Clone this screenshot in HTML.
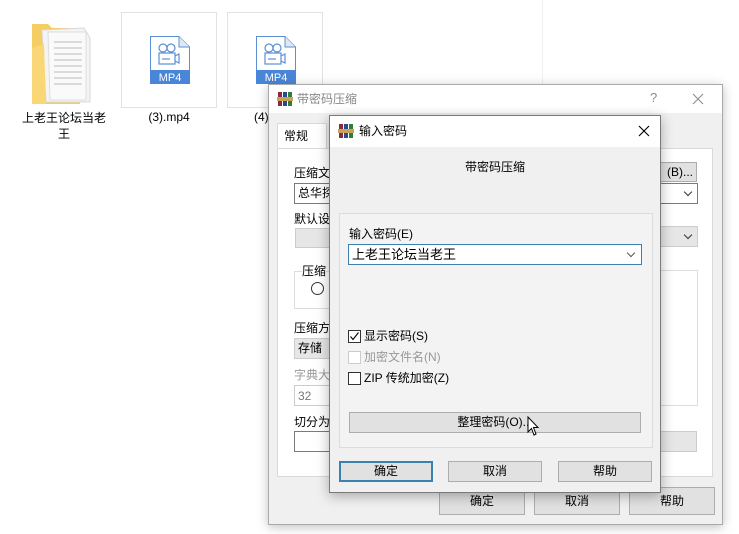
<!DOCTYPE html>
<html><head><meta charset="utf-8"><style>
*{box-sizing:border-box;margin:0;padding:0}
body{width:739px;height:534px;background:#fff;position:relative;overflow:hidden;font-family:"Liberation Sans","Noto Sans CJK SC","Microsoft YaHei",sans-serif;font-size:12px;color:#000}
.a{position:absolute}
.t{position:absolute;white-space:nowrap;font-size:12px;line-height:14px}
.btn{position:absolute;background:#e1e1e1;border:1px solid #adadad;text-align:center;font-size:12px}
.inp{position:absolute;background:#fff;border:1px solid #7a7a7a}
.chev{position:absolute;width:6px;height:6px;border-right:1px solid #333;border-bottom:1px solid #333;transform:rotate(45deg)}
.cb{position:absolute;width:13px;height:13px;border:1px solid #333;background:#fff}
.icon{position:absolute;width:16px;height:16px}
</style></head><body>
<div class="a" style="left:542px;top:0;width:1px;height:84px;background:#f0f0f0"></div>
<svg class="a" style="left:28px;top:18px" width="68" height="90" viewBox="0 0 68 90">
<path d="M4 6 L20 6 L24 10 L52 10 L52 86 L4 86 Z" fill="#f5cd62"/>
<path d="M14 12 L56 10 L62 20 L62 84 L18 84 Z" fill="#f4f4f4" stroke="#d8d8d8"/>
<path d="M20 14 L58 14 L58 82 L22 82 Z" fill="#fafafa" stroke="#ddd"/>
<g stroke="#bbb" stroke-width="1"><line x1="26" y1="24" x2="54" y2="24"/><line x1="26" y1="30" x2="54" y2="30"/><line x1="26" y1="36" x2="54" y2="36"/><line x1="26" y1="42" x2="54" y2="42"/><line x1="26" y1="48" x2="54" y2="48"/><line x1="26" y1="54" x2="54" y2="54"/><line x1="26" y1="60" x2="54" y2="60"/><line x1="26" y1="66" x2="54" y2="66"/></g>
<path d="M4 30 L16 26 L18 86 L4 86 Z" fill="#f9d777"/>
</svg>
<div class="t" style="left:14px;top:110px;width:100px;text-align:center;font-size:12px;line-height:16px">上老王论坛当老<br>王</div>
<div class="a" style="left:121px;top:12px;width:96px;height:96px;border:1px solid #e3e3e3"></div>
<div class="a" style="left:227px;top:12px;width:96px;height:96px;border:1px solid #e3e3e3"></div>
<svg class="a" style="left:150px;top:36px" width="40" height="48" viewBox="0 0 40 48">
<path d="M0.5 0.5 L29 0.5 L39.5 11 L39.5 47.5 L0.5 47.5 Z" fill="#fff" stroke="#5b8fd6"/>
<path d="M29 0.5 L29 11 L39.5 11" fill="#dfe8f5" stroke="#5b8fd6"/>
<rect x="0" y="34" width="40" height="14" fill="#4a86d8"/>
<text x="20" y="45" fill="#fff" font-size="11" text-anchor="middle" font-family="Liberation Sans">MP4</text>
<g fill="none" stroke="#5b8fd6" stroke-width="1.2"><circle cx="13" cy="12" r="4"/><circle cx="21" cy="12" r="4"/><rect x="9" y="17" width="16" height="11"/><line x1="12" y1="23" x2="20" y2="23"/><path d="M25 20 L29 18 L29 27 L25 25"/></g>
</svg>
<svg class="a" style="left:256px;top:36px" width="40" height="48" viewBox="0 0 40 48">
<path d="M0.5 0.5 L29 0.5 L39.5 11 L39.5 47.5 L0.5 47.5 Z" fill="#fff" stroke="#5b8fd6"/>
<path d="M29 0.5 L29 11 L39.5 11" fill="#dfe8f5" stroke="#5b8fd6"/>
<rect x="0" y="34" width="40" height="14" fill="#4a86d8"/>
<text x="20" y="45" fill="#fff" font-size="11" text-anchor="middle" font-family="Liberation Sans">MP4</text>
<g fill="none" stroke="#5b8fd6" stroke-width="1.2"><circle cx="13" cy="12" r="4"/><circle cx="21" cy="12" r="4"/><rect x="9" y="17" width="16" height="11"/><line x1="12" y1="23" x2="20" y2="23"/><path d="M25 20 L29 18 L29 27 L25 25"/></g>
</svg>
<div class="t" style="left:121px;top:110px;width:96px;text-align:center">(3).mp4</div>
<div class="t" style="left:254px;top:110px">(4)</div>

<div class="a" style="left:268px;top:84px;width:455px;height:441px;background:#f0f0f0;border:1px solid #aaa;box-shadow:0 2px 10px rgba(0,0,0,.25)">
 <div class="a" style="left:0;top:0;width:453px;height:28px;background:#fff"></div>
 <svg class="icon" style="left:8px;top:6px" viewBox="0 0 16 16"><rect x="1" y="1" width="4" height="14" fill="#8b2a3a"/><rect x="6" y="1" width="4" height="14" fill="#2a4b8b"/><rect x="11" y="1" width="4" height="14" fill="#2f7d3a"/><rect x="0" y="6" width="16" height="4" fill="#c9a25a"/></svg>
 <div class="t" style="left:28px;top:7px;color:#888">带密码压缩</div>
 <div class="t" style="left:381px;top:6px;color:#888;font-size:13px">?</div>
 <svg class="a" style="left:423px;top:8px" width="12" height="12"><path d="M1 1 L11 11 M11 1 L1 11" stroke="#888" stroke-width="1"/></svg>
 <div class="a" style="left:8px;top:38px;width:50px;height:26px;background:#fff;border:1px solid #d9d9d9;border-bottom:none"></div>
 <div class="t" style="left:15px;top:44px">常规</div>
 <div class="a" style="left:8px;top:63px;width:436px;height:329px;background:#fff;border:1px solid #d9d9d9"></div>
 <div class="t" style="left:25px;top:81px">压缩文</div>
 <div class="inp" style="left:25px;top:98px;width:40px;height:21px"></div>
 <div class="t" style="left:29px;top:101px">总华探</div>
 <div class="t" style="left:25px;top:127px">默认设</div>
 <div class="a" style="left:26px;top:143px;width:40px;height:20px;background:#e6e6e6;border:1px solid #ccc"></div>
 <div class="a" style="left:25px;top:186px;width:60px;height:38px;border:1px solid #dcdcdc"></div>
 <div class="t" style="left:33px;top:179px;background:#fff">压缩</div>
 <div class="a" style="left:42px;top:197px;width:13px;height:13px;border:1px solid #333;border-radius:50%"></div>
 <div class="t" style="left:25px;top:236px">压缩方</div>
 <div class="a" style="left:25px;top:253px;width:40px;height:21px;background:#e6e6e6;border:1px solid #ccc"></div>
 <div class="t" style="left:29px;top:256px">存储</div>
 <div class="t" style="left:25px;top:283px;color:#999">字典大</div>
 <div class="a" style="left:25px;top:300px;width:40px;height:21px;border:1px solid #ccc"></div>
 <div class="t" style="left:29px;top:304px;color:#777">32</div>
 <div class="t" style="left:25px;top:330px">切分为</div>
 <div class="inp" style="left:25px;top:346px;width:40px;height:21px"></div>
 <div class="btn" style="left:380px;top:77px;width:48px;height:20px;line-height:18px;text-align:right;padding-right:3px">(B)...</div>
 <div class="inp" style="left:380px;top:98px;width:49px;height:21px"></div>
 <div class="chev" style="left:416px;top:104px"></div>
 <div class="a" style="left:380px;top:141px;width:49px;height:21px;background:#e6e6e6;border:1px solid #ccc"></div>
 <div class="chev" style="left:416px;top:147px"></div>
 <div class="a" style="left:380px;top:185px;width:49px;height:136px;border:1px solid #dcdcdc"></div>
 <div class="a" style="left:380px;top:346px;width:48px;height:21px;background:#e6e6e6;border:1px solid #ccc"></div>
 <div class="btn" style="left:170px;top:402px;width:86px;height:28px;line-height:26px">确定</div>
 <div class="btn" style="left:265px;top:402px;width:86px;height:28px;line-height:26px">取消</div>
 <div class="btn" style="left:360px;top:402px;width:86px;height:28px;line-height:26px">帮助</div>
</div>

<div class="a" style="left:329px;top:115px;width:332px;height:378px;background:#f0f0f0;border:1px solid #7a7a7a;box-shadow:0 3px 12px rgba(0,0,0,.3)">
 <div class="a" style="left:0;top:0;width:330px;height:31px;background:#fff"></div>
 <svg class="icon" style="left:8px;top:7px" viewBox="0 0 16 16"><rect x="1" y="1" width="4" height="14" fill="#8b2a3a"/><rect x="6" y="1" width="4" height="14" fill="#2a4b8b"/><rect x="11" y="1" width="4" height="14" fill="#2f7d3a"/><rect x="0" y="6" width="16" height="4" fill="#c9a25a"/></svg>
 <div class="t" style="left:29px;top:8px">输入密码</div>
 <svg class="a" style="left:308px;top:9px" width="12" height="12"><path d="M1 1 L11 11 M11 1 L1 11" stroke="#000" stroke-width="1.1"/></svg>
 <div class="t" style="left:0;top:44px;width:330px;text-align:center">带密码压缩</div>
 <div class="a" style="left:9px;top:97px;width:314px;height:235px;background:#f3f3f3;border:1px solid #dcdcdc"></div>
 <div class="t" style="left:19px;top:111px">输入密码(E)</div>
 <div class="a" style="left:18px;top:128px;width:294px;height:21px;background:#fff;border:1px solid #3c7fb1"></div>
 <div class="t" style="left:22px;top:132px;font-size:13px">上老王论坛当老王</div>
 <div class="chev" style="left:298px;top:134px;border-color:#555"></div>
 <div class="cb" style="left:18px;top:214px"></div>
 <svg class="a" style="left:18px;top:214px" width="13" height="13"><path d="M2.5 6.5 L5 9.5 L10.5 2.5" fill="none" stroke="#000" stroke-width="1.1"/></svg>
 <div class="t" style="left:34px;top:213px">显示密码(S)</div>
 <div class="cb" style="left:18px;top:235px;border-color:#ccc"></div>
 <div class="t" style="left:34px;top:234px;color:#999">加密文件名(N)</div>
 <div class="cb" style="left:18px;top:256px"></div>
 <div class="t" style="left:34px;top:255px">ZIP 传统加密(Z)</div>
 <div class="btn" style="left:19px;top:296px;width:292px;height:21px;line-height:19px">整理密码(O)...</div>
 <svg class="a" style="left:197px;top:300px" width="14" height="22" viewBox="0 0 14 22"><path d="M1 1 L1 16 L4.5 12.5 L7 19 L9 18 L6.5 11.5 L11 11.5 Z" fill="#fff" stroke="#000"/></svg>
 <div class="btn" style="left:9px;top:345px;width:94px;height:21px;line-height:17px;border:2px solid #3c7fb1">确定</div>
 <div class="btn" style="left:118px;top:345px;width:94px;height:21px;line-height:19px">取消</div>
 <div class="btn" style="left:228px;top:345px;width:94px;height:21px;line-height:19px">帮助</div>
</div>
</body></html>
